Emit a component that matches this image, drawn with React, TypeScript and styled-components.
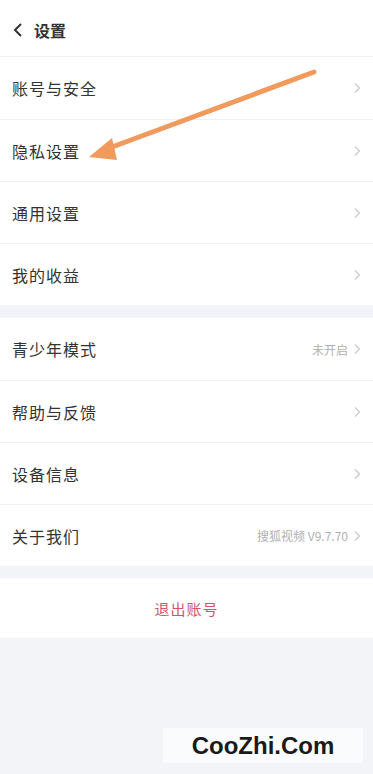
import React from "react";
import styled, { createGlobalStyle } from "styled-components";

const GlobalStyle = createGlobalStyle`
  html, body {
    margin: 0;
    padding: 0;
    background: #f2f4f7;
    font-family: "Noto Sans CJK SC", "Noto Sans", sans-serif;
  }
`;

const Page = styled.div`
  position: relative;
  width: 373px;
  height: 774px;
  overflow: hidden;
  background: #f2f4f7;
`;

const Header = styled.div`
  height: 57px;
  background: #fff;
  display: flex;
  align-items: center;
  gap: 10px;
  padding: 4px 0 0 12px;
  box-sizing: border-box;
  border-bottom: 1px solid #f0f0f0;
`;

const Title = styled.div`
  font-size: 16px;
  font-weight: 700;
  color: #333;
`;

const Group = styled.div<{ $gap?: number }>`
  background: #fff;
  margin-top: ${(p) => p.$gap ?? 0}px;
`;

const Row = styled.div`
  height: 62px;
  display: flex;
  align-items: center;
  justify-content: space-between;
  padding: 0 12px;
  box-sizing: border-box;
  border-top: 1px solid #f0f0f0;
  &:first-child {
    border-top: none;
  }
`;

const Label = styled.div`
  font-size: 16px;
  color: #333;
  letter-spacing: 1px;
`;

const Right = styled.div`
  display: flex;
  align-items: center;
  gap: 5px;
`;

const Value = styled.span`
  font-size: 12px;
  color: #b0b0b0;
`;

const Logout = styled.div`
  margin-top: 12px;
  height: 60px;
  background: #fff;
  display: flex;
  align-items: center;
  justify-content: center;
  font-size: 15px;
  color: #cf5570;
  letter-spacing: 1px;
`;

const Watermark = styled.div`
  position: absolute;
  left: 163px;
  top: 728px;
  width: 200px;
  height: 35px;
  background: #fafbfc;
  display: flex;
  align-items: center;
  justify-content: center;
  font-family: "Liberation Sans", Arial, sans-serif;
  font-weight: 700;
  font-size: 24px;
  color: #1a1a1a;
`;

const Arrow = styled.svg`
  position: absolute;
  left: 0;
  top: 0;
  pointer-events: none;
`;

const Chevron = () => (
  <svg width="8" height="12" viewBox="0 0 8 12">
    <path d="M2 1.5 L6.5 6 L2 10.5" fill="none" stroke="#c8c8c8" strokeWidth="1.2" />
  </svg>
);

const group1 = ["账号与安全", "隐私设置", "通用设置", "我的收益"];
const group2: { label: string; value?: string }[] = [
  { label: "青少年模式", value: "未开启" },
  { label: "帮助与反馈" },
  { label: "设备信息" },
  { label: "关于我们", value: "搜狐视频 V9.7.70" },
];

export default function App() {
  return (
    <Page>
      <GlobalStyle />
      <Header>
        <svg width="12" height="16" viewBox="0 0 12 16">
          <path d="M9 2 L3 8 L9 14" fill="none" stroke="#333" strokeWidth="2" />
        </svg>
        <Title>设置</Title>
      </Header>
      <Group>
        {group1.map((l) => (
          <Row key={l}>
            <Label>{l}</Label>
            <Right>
              <Chevron />
            </Right>
          </Row>
        ))}
      </Group>
      <Group $gap={13}>
        {group2.map((r) => (
          <Row key={r.label}>
            <Label>{r.label}</Label>
            <Right>
              {r.value && <Value>{r.value}</Value>}
              <Chevron />
            </Right>
          </Row>
        ))}
      </Group>
      <Logout>退出账号</Logout>
      <Watermark>CooZhi.Com</Watermark>
      <Arrow width="373" height="774" viewBox="0 0 373 774">
        <line x1="314" y1="72" x2="104" y2="150" stroke="#f19a5e" strokeWidth="5" strokeLinecap="round" />
        <polygon points="89,157 112,138 117,160" fill="#f19a5e" />
      </Arrow>
    </Page>
  );
}
